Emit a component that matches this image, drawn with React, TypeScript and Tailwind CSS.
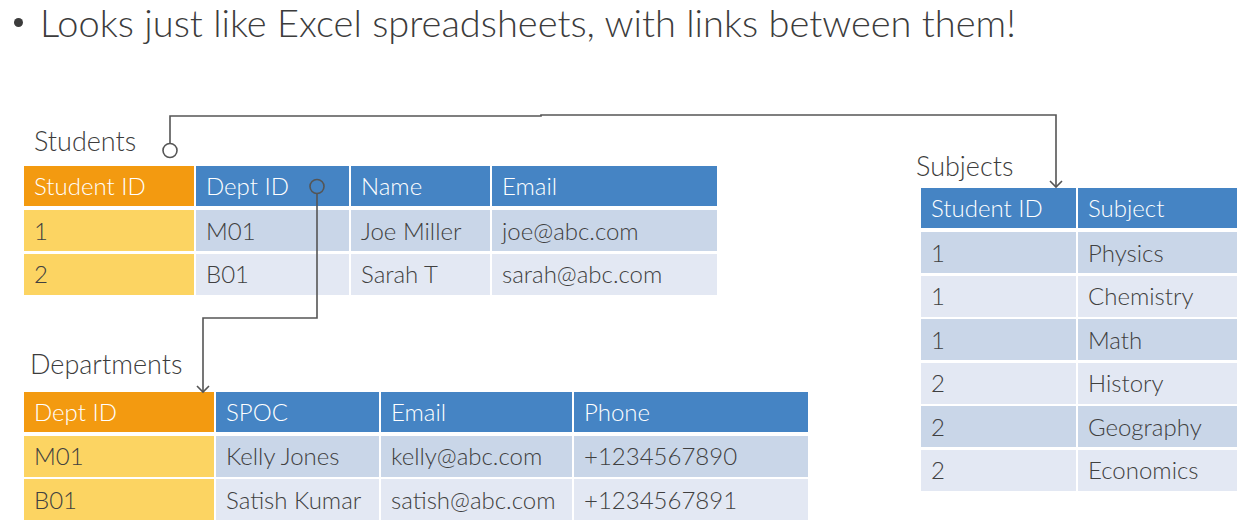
import React from "react";

type Cell = string;

const ORANGE = "bg-[#f39a10]";
const YELLOW = "bg-[#fcd462]";
const BLUE = "bg-[#4584c4]";
const DARK = "bg-[#c9d6e8]";
const LIGHT = "bg-[#e3e8f3]";

function DataTable({
  cols,
  header,
  rows,
  keyed,
}: {
  cols: string;
  header: Cell[];
  rows: Cell[][];
  keyed: boolean;
}) {
  return (
    <div className="flex flex-col">
      <div className={`grid gap-x-[2px] ${cols}`}>
        {header.map((h, i) => (
          <div
            key={h}
            className={`flex h-[40px] items-center pl-[10px] text-white ${
              keyed && i === 0 ? ORANGE : BLUE
            }`}
          >
            {h}
          </div>
        ))}
      </div>
      <div className={`mt-[4px] grid gap-x-[2px] gap-y-[2.5px] ${cols}`}>
        {rows.map((row, r) =>
          row.map((c, i) => (
            <div
              key={`${r}-${i}`}
              className={`flex h-[41px] items-center pl-[10px] text-[#404040] ${
                keyed && i === 0 ? YELLOW : r % 2 === 0 ? DARK : LIGHT
              }`}
            >
              {c}
            </div>
          ))
        )}
      </div>
    </div>
  );
}

export default function App() {
  return (
    <div className="relative h-[527px] w-[1246px] overflow-hidden bg-white font-['Lato',sans-serif] text-[24px] font-light leading-none">
      {/* heading bullet */}
      <div className="flex h-[60px] items-start pl-[14px] text-[38px] leading-[44px] text-[#3c3c3c]">
        <span className="mr-[17px] mt-[18px] h-[9px] w-[9px] shrink-0 rounded-full bg-[#3c3c3c]" />
        <span>Looks just like Excel spreadsheets, with links between them!</span>
      </div>

      <div className="flex justify-between pl-[24px] pr-[9px]">
        <div className="flex flex-col">
          <div className="mt-[67px] mb-[12px] pl-[10px] text-[27px] leading-[27px] text-[#3c3c3c]">
            Students
          </div>
          <DataTable
            keyed
            cols="grid-cols-[170px_153px_139px_225px]"
            header={["Student ID", "Dept ID", "Name", "Email"]}
            rows={[
              ["1", "M01", "Joe Miller", "joe@abc.com"],
              ["2", "B01", "Sarah T", "sarah@abc.com"],
            ]}
          />
          <div className="mt-[55px] mb-[15px] pl-[6px] text-[27px] leading-[27px] text-[#3c3c3c]">
            Departments
          </div>
          <DataTable
            keyed
            cols="grid-cols-[190px_163px_191px_234px]"
            header={["Dept ID", "SPOC", "Email", "Phone"]}
            rows={[
              ["M01", "Kelly Jones", "kelly@abc.com", "+1234567890"],
              ["B01", "Satish Kumar", "satish@abc.com", "+1234567891"],
            ]}
          />
        </div>

        <div className="flex flex-col">
          <div className="mt-[92px] mb-[9px] -ml-[5px] text-[27px] leading-[27px] text-[#3c3c3c]">
            Subjects
          </div>
          <DataTable
            keyed={false}
            cols="grid-cols-[155px_159px]"
            header={["Student ID", "Subject"]}
            rows={[
              ["1", "Physics"],
              ["1", "Chemistry"],
              ["1", "Math"],
              ["2", "History"],
              ["2", "Geography"],
              ["2", "Economics"],
            ]}
          />
        </div>
      </div>

      {/* relationship connectors drawn over the tables */}
      <svg
        className="pointer-events-none absolute inset-0"
        width="1246"
        height="527"
        fill="none"
        stroke="#555555"
        strokeWidth="1.6"
      >
        <circle cx="170" cy="150.5" r="7" />
        <path d="M170 143.5 V116 H541 V115 H1056 V187" />
        <path d="M1050 181 L1056 187 L1062 181" />
        <circle cx="317" cy="186.5" r="7" />
        <path d="M317 193.5 V318 H203 V392" />
        <path d="M197 386 L203 392 L209 386" />
      </svg>
    </div>
  );
}
